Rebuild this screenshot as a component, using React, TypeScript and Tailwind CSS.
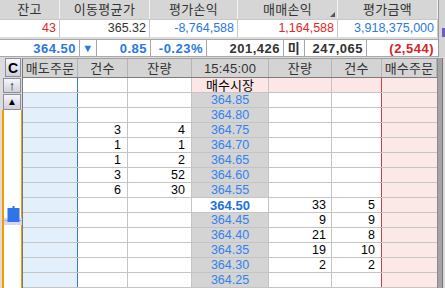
import React from "react";

type Row = {
  price: string;
  sc?: string;
  sq?: string;
  bq?: string;
  bc?: string;
  market?: boolean;
  current?: boolean;
};

const rows: Row[] = [
  { price: "매수시장", market: true },
  { price: "364.85" },
  { price: "364.80" },
  { price: "364.75", sc: "3", sq: "4" },
  { price: "364.70", sc: "1", sq: "1" },
  { price: "364.65", sc: "1", sq: "2" },
  { price: "364.60", sc: "3", sq: "52" },
  { price: "364.55", sc: "6", sq: "30" },
  { price: "364.50", bq: "33", bc: "5", current: true },
  { price: "364.45", bq: "9", bc: "9" },
  { price: "364.40", bq: "21", bc: "8" },
  { price: "364.35", bq: "19", bc: "10" },
  { price: "364.30", bq: "2", bc: "2" },
  { price: "364.25" },
];

const summary = [
  { label: "잔고", value: "43", color: "text-[#e02828]" },
  { label: "이동평균가", value: "365.32", color: "text-[#333]" },
  { label: "평가손익", value: "-8,764,588", color: "text-[#2a78e4]" },
  { label: "매매손익", value: "1,164,588", color: "text-[#e02828]", sort: true },
  { label: "평가금액", value: "3,918,375,000", color: "text-[#2a78e4]" },
];

const tableHeaders = ["매도주문", "건수", "잔량", "15:45:00", "잔량", "건수", "매수주문"];

const sideBtn =
  "flex items-center justify-center border border-[#8c8c9c] bg-gradient-to-b from-[#f6f6fb] to-[#cfd0dc] text-black font-bold";

export default function App() {
  return (
    <div className="w-[445px] h-[288px] overflow-hidden bg-[#dcdcdc] font-['Liberation_Sans','Noto_Sans_CJK_KR',sans-serif] text-[12.5px] leading-none">
      {/* Account summary */}
      <div className="flex">
        <div className="w-[438px]">
          <div className="grid grid-cols-[60px_90px_88px_100px_100px]">
            {summary.map((s) => (
              <div
                key={s.label}
                className="relative h-[19px] flex items-center justify-center bg-[#d6d6d6] border-r border-[#f2f2f2] text-[#333] text-[13px] tracking-[0.3px]"
              >
                {s.label}
                {s.sort && (
                  <span className="absolute right-[2px] bottom-[2px] w-0 h-0 border-l-[5px] border-l-transparent border-b-[5px] border-b-[#555]" />
                )}
              </div>
            ))}
            {summary.map((s) => (
              <div
                key={s.label + "v"}
                className={`h-[18px] flex items-center justify-end pr-[3px] bg-white border-r border-t border-[#c8c8c8] ${s.color}`}
              >
                {s.value}
              </div>
            ))}
          </div>
          <div className="h-[2px]" />
          <div className="grid grid-cols-[80px_17px_54px_56px_77px_21px_62px_71px] h-[18px] bg-white border-y border-[#a8a8a8] font-bold text-[13px] tracking-[0.5px]">
            <div className="flex items-center justify-end pr-[3px] text-[#2a78e4] border-r border-[#a8a8a8]">364.50</div>
            <div className="flex items-center justify-center text-[#2a78e4] text-[11px] border-r border-[#a8a8a8]">▼</div>
            <div className="flex items-center justify-end pr-[3px] text-[#2a78e4] border-r border-[#a8a8a8]">0.85</div>
            <div className="flex items-center justify-end pr-[3px] text-[#2a78e4] border-r border-[#a8a8a8]">-0.23%</div>
            <div className="flex items-center justify-end pr-[3px] text-[#333] border-r border-[#a8a8a8]">201,426</div>
            <div className="flex items-center justify-center text-[#333] border-r border-[#a8a8a8]">미</div>
            <div className="flex items-center justify-end pr-[3px] text-[#333] border-r border-[#a8a8a8]">247,065</div>
            <div className="flex items-center justify-end pr-[4px] text-[#d42525]">(2,544)</div>
          </div>
        </div>
        <div className="flex-1 flex flex-col bg-[#d4d4d4] border-l border-[#9a9a9a]">
          <div className="h-[28px]" />
          <div className="h-[9px] ml-auto w-[3px] bg-[#6c5cc4]" />
        </div>
      </div>
      <div className="h-[1px]" />

      {/* Order book */}
      <div className="flex">
        {/* Left strip */}
        <div className="w-[22px] flex flex-col">
          <div className={`${sideBtn} ml-[5px] w-[16px] h-[19px] text-[14px]`}>C</div>
          <div className={`${sideBtn} ml-[3px] w-[18px] h-[15px] mt-[1px] text-[13px]`}>↑</div>
          <div className={`${sideBtn} ml-[3px] w-[18px] h-[16px] mt-[1px] text-[10px]`}>▲</div>
          <div className="relative ml-[2px] w-[20px] h-[180px] bg-white border-l-2 border-r border-[#f59a00]">
            <svg className="absolute left-0 top-0" width="18" height="180" viewBox="0 0 18 180">
              <rect x="0" y="108" width="18" height="7" fill="#dcd4f0" />
              <line x1="0" y1="110.5" x2="18" y2="110.5" stroke="#b4b4c4" />
              <rect x="8.5" y="96" width="2" height="3" fill="#2f74e8" />
              <rect x="3.5" y="98" width="12" height="14" fill="#2f74e8" />
            </svg>
          </div>
        </div>

        {/* Grid */}
        <div className="w-[415px] border-l border-[#7a7a7a]">
          <div className="grid grid-cols-[55px_50px_64px_77px_63px_50px_55px] h-[20px] bg-[#d4d4d4] border-b border-[#7c7c7c] border-t border-t-[#a0a0a0]">
            {tableHeaders.map((h, i) => (
              <div
                key={i}
                className="flex items-center justify-center text-[#333] text-[13px] tracking-[0.2px] border-r border-[#b4b4b4]"
              >
                {h}
              </div>
            ))}
          </div>
          {rows.map((r) => (
            <div
              key={r.price}
              className="grid grid-cols-[55px_50px_64px_77px_63px_50px_55px] h-[15px] border-b border-[#c4c4c4] text-black"
            >
              <div className={`border-r border-[#3a78d8] ${r.market ? "bg-white" : "bg-[#e3effb]"}`} />
              <div className="flex items-center justify-end pr-[6px] bg-white border-r border-[#c4c4c4]">{r.sc}</div>
              <div className="flex items-center justify-end pr-[6px] bg-white border-r border-[#c4c4c4]">{r.sq}</div>
              <div
                className={`flex items-center justify-center border-r border-[#c4c4c4] ${
                  r.market
                    ? "bg-[#fde6e6] text-black text-[13px]"
                    : r.current
                    ? "bg-white text-[#1f6fe0] font-bold text-[13px]"
                    : "bg-[#d4d4d4] text-[#3382ee]"
                }`}
              >
                {r.price}
              </div>
              <div className={`flex items-center justify-end pr-[5px] border-r border-[#c4c4c4] ${r.market ? "bg-[#fde6e6]" : "bg-white"}`}>{r.bq}</div>
              <div className={`flex items-center justify-end pr-[6px] border-r border-[#d04040] ${r.market ? "bg-[#fde6e6]" : "bg-white"}`}>{r.bc}</div>
              <div className="bg-[#fde8e8]" />
            </div>
          ))}
        </div>

        {/* Scrollbar */}
        <div className="flex-1 flex border-l border-[#8a8a8a]">
          <div className="w-[4px] bg-[#a4a4a8]" />
          <div className="w-[1px] bg-[#7a7a7a]" />
          <div className="flex-1 bg-[#d8d8d8]" />
        </div>
      </div>
    </div>
  );
}
